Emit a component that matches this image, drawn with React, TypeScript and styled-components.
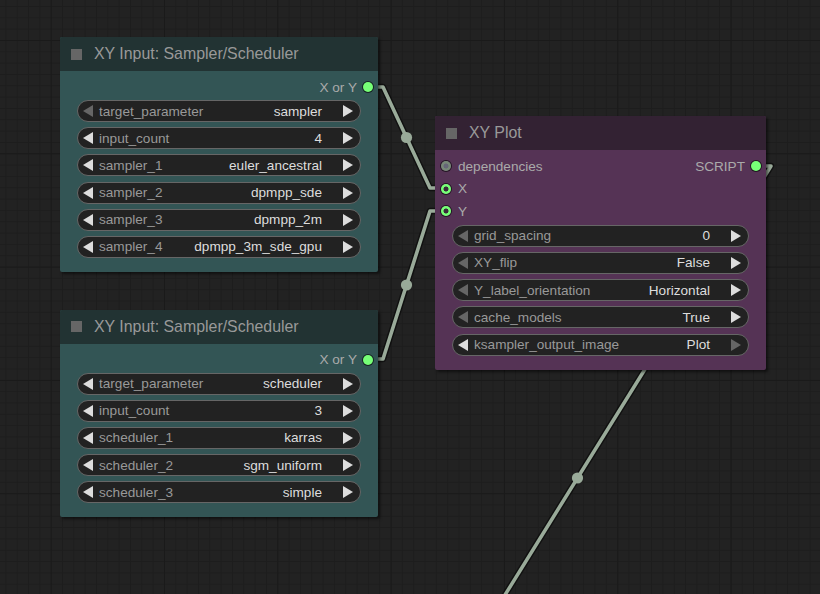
import styled, { createGlobalStyle } from "styled-components";

const GlobalStyle = createGlobalStyle`
  html, body {
    margin: 0;
    padding: 0;
    background: #222222;
  }
  * {
    box-sizing: border-box;
  }
`;

const Canvas = styled.div`
  position: relative;
  width: 820px;
  height: 594px;
  overflow: hidden;
  background-color: #222222;
  background-image:
    linear-gradient(to right, #1a1a1a 1px, transparent 1px),
    linear-gradient(to bottom, #1a1a1a 1px, transparent 1px),
    linear-gradient(to right, #1d1d1d 1px, transparent 1px),
    linear-gradient(to bottom, #1d1d1d 1px, transparent 1px);
  background-size:
    113.33px 113.33px,
    113.33px 113.33px,
    11.333px 11.333px,
    11.333px 11.333px;
  background-position:
    50.7px 0,
    0 40px,
    5.4px 0,
    0 6px;
  font-family: "Liberation Sans", Arial, sans-serif;
`;

const Links = styled.svg`
  position: absolute;
  inset: 0;
  width: 820px;
  height: 594px;
`;

const Node = styled.div<{ $x: number; $y: number; $w: number; $bg: string }>`
  position: absolute;
  left: ${({ $x }) => $x}px;
  top: ${({ $y }) => $y}px;
  width: ${({ $w }) => $w}px;
  background: ${({ $bg }) => $bg};
  border-radius: 2px;
  box-shadow: 2px 2px 3px rgba(0, 0, 0, 0.55);
  display: flex;
  flex-direction: column;
`;

const TitleBar = styled.div<{ $bg: string }>`
  height: 34px;
  background: ${({ $bg }) => $bg};
  border-radius: 2px 2px 0 0;
  display: flex;
  align-items: center;
  padding-left: 11px;
  gap: 12px;
  color: #999999;
  font-size: 15.9px;
`;

const TitleBox = styled.span`
  width: 11px;
  height: 11px;
  background: #666666;
`;

const Body = styled.div`
  display: flex;
  flex-direction: column;
  padding: 5px 17px 14px;
`;

const Slots = styled.div`
  display: flex;
  flex-direction: column;
  margin: 0 -12px 2px -11px;
`;

const SlotRow = styled.div<{ $h: number }>`
  height: ${({ $h }) => $h}px;
  display: flex;
  align-items: center;
  justify-content: space-between;
  color: #aaaaaa;
  font-size: 13.6px;
`;

const SlotSide = styled.div<{ $right?: boolean }>`
  display: flex;
  align-items: center;
  gap: ${({ $right }) => ($right ? 6 : 7)}px;
  margin-left: ${({ $right }) => ($right ? "auto" : "0")};
`;

const Dot = styled.span<{ $color: string; $hollow?: string }>`
  width: 10px;
  height: 10px;
  border-radius: 50%;
  background: ${({ $hollow, $color }) =>
    $hollow
      ? `radial-gradient(circle, ${$hollow} 0 2.2px, ${$color} 2.8px)`
      : $color};
  box-shadow: 0 0 0 1px rgba(0, 0, 0, 0.6);
`;

const Widgets = styled.div`
  display: flex;
  flex-direction: column;
  gap: 5.2px;
`;

const Widget = styled.div`
  height: 22px;
  border: 1px solid #666666;
  border-radius: 11px;
  background: #222222;
  display: flex;
  align-items: center;
  padding: 0 7px 0 5px;
  font-size: 13.6px;
`;

const Label = styled.span`
  color: #999999;
  margin-left: 6px;
  white-space: nowrap;
`;

const Value = styled.span`
  color: #dddddd;
  margin-left: auto;
  margin-right: 21px;
  white-space: nowrap;
`;

const Arrow = ({ dir, on }: { dir: "l" | "r"; on: boolean }) => (
  <svg width="10" height="12" viewBox="0 0 10 12" style={{ flex: "none" }}>
    <polygon
      points={dir === "l" ? "10,0 0,6 10,12" : "0,0 10,6 0,12"}
      fill={on ? "#dddddd" : "#666666"}
    />
  </svg>
);

type W = { label: string; value: string; left?: boolean; right?: boolean };

const ComboWidget = ({ label, value, left = true, right = true }: W) => (
  <Widget>
    <Arrow dir="l" on={left} />
    <Label>{label}</Label>
    <Value>{value}</Value>
    <Arrow dir="r" on={right} />
  </Widget>
);

const CYAN = { title: "#223333", body: "#335555" };
const PURPLE = { title: "#332233", body: "#553355" };
const LINK = "#99aa99";

const nodeOne: W[] = [
  { label: "target_parameter", value: "sampler", left: false },
  { label: "input_count", value: "4" },
  { label: "sampler_1", value: "euler_ancestral" },
  { label: "sampler_2", value: "dpmpp_sde" },
  { label: "sampler_3", value: "dpmpp_2m" },
  { label: "sampler_4", value: "dpmpp_3m_sde_gpu" },
];

const nodeTwo: W[] = [
  { label: "target_parameter", value: "scheduler" },
  { label: "input_count", value: "3" },
  { label: "scheduler_1", value: "karras" },
  { label: "scheduler_2", value: "sgm_uniform" },
  { label: "scheduler_3", value: "simple" },
];

const plot: W[] = [
  { label: "grid_spacing", value: "0", left: false },
  { label: "XY_flip", value: "False", left: false },
  { label: "Y_label_orientation", value: "Horizontal", left: false },
  { label: "cache_models", value: "True", left: false },
  { label: "ksampler_output_image", value: "Plot", right: false },
];

const Link = ({ pts, mid }: { pts: [number, number][]; mid: [number, number] }) => {
  const d = pts.map((p, i) => `${i ? "L" : "M"}${p[0]} ${p[1]}`).join(" ");
  return (
    <g>
      <path d={d} fill="none" stroke="rgba(0,0,0,0.5)" strokeWidth="6.5" strokeLinejoin="round" />
      <path d={d} fill="none" stroke={LINK} strokeWidth="3.6" strokeLinejoin="round" />
      <circle cx={mid[0]} cy={mid[1]} r="5.6" fill={LINK} />
    </g>
  );
};

const InputNode = ({ y, rows }: { y: number; rows: W[] }) => (
  <Node $x={60} $y={y} $w={318} $bg={CYAN.body}>
    <TitleBar $bg={CYAN.title}>
      <TitleBox />
      XY Input: Sampler/Scheduler
    </TitleBar>
    <Body>
      <Slots>
        <SlotRow $h={22}>
          <SlotSide $right>
            X or Y
            <Dot $color="#77ff77" />
          </SlotSide>
        </SlotRow>
      </Slots>
      <Widgets>
        {rows.map((r) => (
          <ComboWidget key={r.label} {...r} />
        ))}
      </Widgets>
    </Body>
  </Node>
);

export default function App() {
  return (
    <>
      <GlobalStyle />
      <Canvas>
        <Links viewBox="0 0 820 594">
          <Link pts={[[368, 87], [383, 87], [430, 188], [446, 188]]} mid={[406.5, 137.5]} />
          <Link pts={[[368, 359], [383, 359], [430, 211], [446, 211]]} mid={[406.5, 285]} />
          <Link pts={[[756, 166], [771, 166], [384, 790], [370, 790]]} mid={[577.5, 478]} />
        </Links>

        <InputNode y={37} rows={nodeOne} />
        <InputNode y={309.5} rows={nodeTwo} />

        <Node $x={435} $y={116} $w={331} $bg={PURPLE.body}>
          <TitleBar $bg={PURPLE.title}>
            <TitleBox />
            XY Plot
          </TitleBar>
          <Body>
            <Slots>
              <SlotRow $h={22.6}>
                <SlotSide>
                  <Dot $color="#778877" $hollow="#666677" />
                  dependencies
                </SlotSide>
                <SlotSide $right>
                  SCRIPT
                  <Dot $color="#77ff77" />
                </SlotSide>
              </SlotRow>
              <SlotRow $h={22.6}>
                <SlotSide>
                  <Dot $color="#77ff77" $hollow="#3a2a3a" />X
                </SlotSide>
              </SlotRow>
              <SlotRow $h={22.6}>
                <SlotSide>
                  <Dot $color="#77ff77" $hollow="#3a2a3a" />Y
                </SlotSide>
              </SlotRow>
            </Slots>
            <Widgets>
              {plot.map((r) => (
                <ComboWidget key={r.label} {...r} />
              ))}
            </Widgets>
          </Body>
        </Node>
      </Canvas>
    </>
  );
}
